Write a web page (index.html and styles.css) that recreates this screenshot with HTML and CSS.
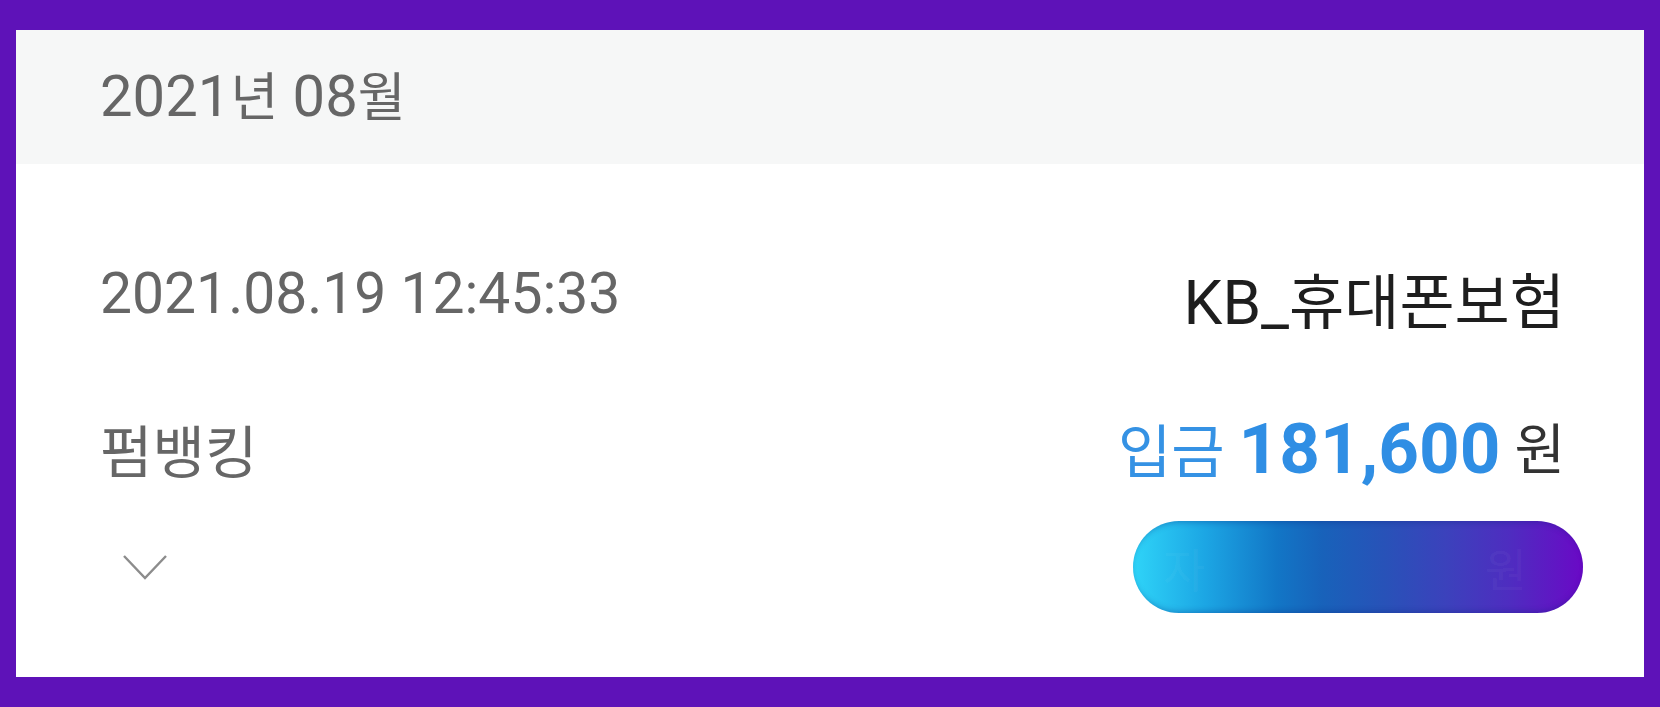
FILE: index.html
```html
<!DOCTYPE html>
<html lang="ko">
<head>
<meta charset="utf-8">
<title>거래내역</title>
<link rel="stylesheet" href="styles.css">
</head>
<body>
<div class="panel">
  <div class="month">2021<span class="ko">년</span> 08<span class="ko">월</span></div>
  <div class="content">
    <div class="row row-top">
      <div class="date">2021.08.19 12:45:33</div>
      <div class="payee">KB_<span class="ko">휴대폰보험</span></div>
    </div>
    <div class="row row-mid">
      <div class="method">펌뱅킹</div>
      <div class="amount"><span class="kind">입금</span> <span class="num">181,600</span> <span class="won">원</span></div>
    </div>
    <div class="row row-bottom">
      <svg class="chevron" width="46" height="26" viewBox="0 0 46 26"><polyline points="2,2 23,24 44,2" fill="none" stroke="#8c8c8c" stroke-width="2.4"/></svg>
      <div class="pill"><span class="pill-l">자</span><span class="pill-r">원</span></div>
    </div>
  </div>
</div>
</body>
</html>
```

FILE: styles.css
```css
html, body {
  margin: 0;
  height: 100%;
}
body {
  background: #5e12b8;
  padding: 30px 16px;
  box-sizing: border-box;
  font-family: Roboto, "Noto Sans CJK KR", sans-serif;
}
.panel {
  background: #ffffff;
  height: 647px;
  overflow: hidden;
}
.month {
  height: 134px;
  background: #f6f7f7;
  padding-left: 84px;
  box-sizing: border-box;
  display: flex;
  align-items: baseline;
  padding-top: 34px;
  font-size: 58px;
  line-height: 60px;
  color: #666666;
  white-space: pre;
}
.ko {
  font-family: "Noto Sans CJK KR", sans-serif;
  font-size: 54px;
}
.month .ko {
  font-size: 52px;
}
.content {
  padding: 0 79px 0 84px;
}
.row {
  display: flex;
  justify-content: space-between;
}
.row-top {
  margin-top: 100px;
  align-items: flex-start;
  height: 146px;
}
.date {
  font-size: 57px;
  line-height: 60px;
  color: #666666;
}
.payee {
  font-size: 62px;
  line-height: 60px;
  color: #1e1e1e;
  margin-top: 4px;
}
.payee .ko {
  font-size: 60px;
}
.row-mid {
  align-items: baseline;
  height: 111px;
}
.method {
  font-family: "Noto Sans CJK KR", sans-serif;
  font-size: 57px;
  line-height: 70px;
  color: #666666;
}
.amount {
  line-height: 70px;
  font-size: 56px;
  white-space: pre;
}
.kind {
  font-family: "Noto Sans CJK KR", sans-serif;
  color: #3592e4;
  font-size: 58px;
}
.num {
  font-family: Roboto, sans-serif;
  font-weight: 700;
  font-size: 71px;
  color: #2f8ee4;
}
.won {
  font-family: "Noto Sans CJK KR", sans-serif;
  color: #333333;
  font-size: 55px;
  vertical-align: 4px;
}
.row-bottom {
  align-items: center;
  margin-top: 0;
}
.chevron {
  margin-left: 22px;
  display: block;
}
.pill {
  width: 450px;
  height: 92px;
  border-radius: 46px;
  margin-right: -18px;
  background: linear-gradient(90deg, #2fd4f8 0%, #1ca6e4 16%, #1276c6 32%, #1862ba 42%, #2852b8 56%, #3c41bc 70%, #4f2cc0 84%, #6a09c6 100%);
  box-shadow: inset 0 5px 6px -4px rgba(10, 30, 120, 0.35), inset 0 -5px 6px -4px rgba(10, 30, 120, 0.35);
  display: flex;
  justify-content: space-between;
  align-items: center;
  padding: 0 56px 0 30px;
  box-sizing: border-box;
  font-family: "Noto Sans CJK KR", sans-serif;
  font-size: 46px;
  color: rgba(255, 255, 255, 0.05);
}
```
